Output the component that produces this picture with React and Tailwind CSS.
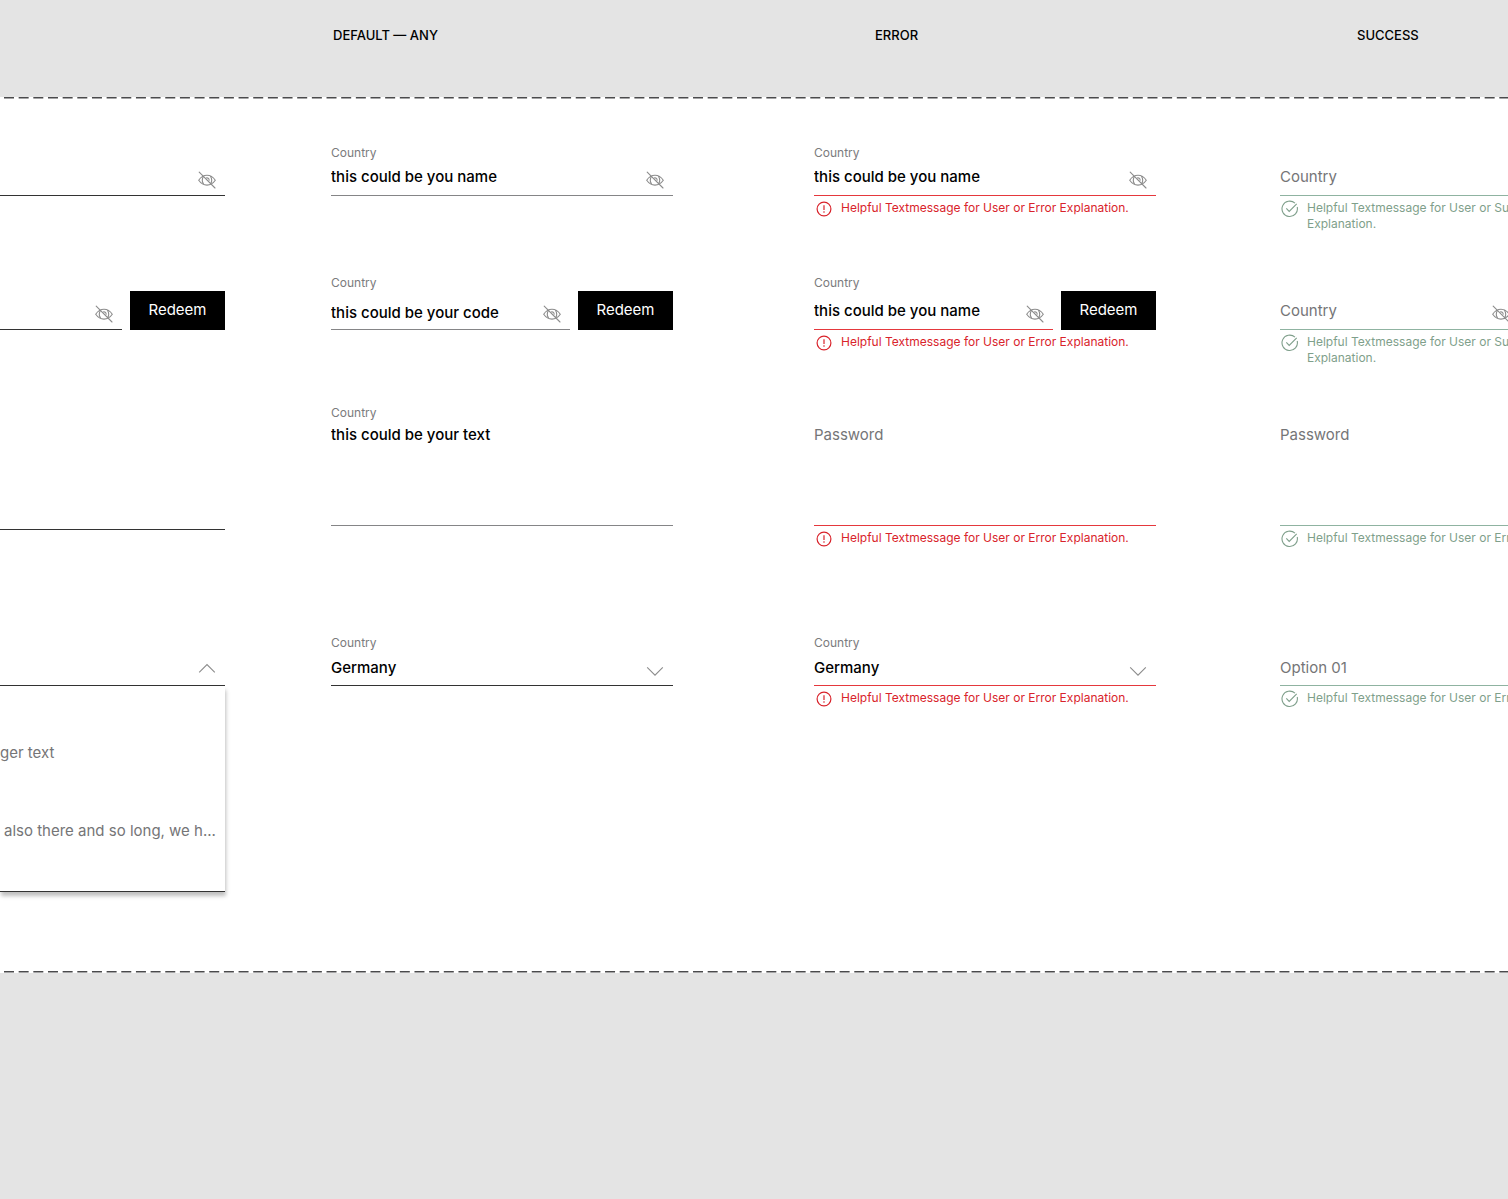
import { useId } from "react";
import { clsx } from "clsx";

const COLUMNS = "grid grid-cols-[minmax(0,225fr)_106px_minmax(0,342fr)_141px_minmax(0,342fr)_124px_minmax(0,228fr)]";
const ROWS = "grid items-start grid-rows-[130px_130px_230px_336px]";

const LINE = {
    dark: "bg-[#333333]",
    gray: "bg-[#858587]",
    error: "bg-[#e5383d]",
    success: "bg-[#8fb3a1]",
};

const ERROR_TEXT = "Helpful Textmessage for User or Error Explanation.";
const SUCCESS_TEXT = "Helpful Textmessage for User or Success Explanation.";

function EyeOff() {
    return (
        <svg className="h-[18px] w-[18px]" viewBox="0 0 18 18" fill="none" stroke="#8c8c8c" strokeWidth="1.1" strokeLinecap="round">
            <path d="M0.7 9.2C3 5.9 5.8 4.3 9 4.3s6 1.6 8.3 4.9C15 12.5 12.2 14.1 9 14.1S3 12.5 0.7 9.2Z" />
            <path d="M5.4 5.5C4 7.8 4 10.6 5.4 12.9M12.6 5.5C14 7.8 14 10.6 12.6 12.9" />
            <path d="M8.6 6.9c1.5-.2 2.6.8 2.5 2.3" />
            <path d="M1.2 1.2 17 17" />
        </svg>
    );
}

function Chevron({ up }) {
    return (
        <svg className="h-[18px] w-[18px]" viewBox="0 0 18 18" fill="none" stroke="#8c8c8c" strokeWidth="1.1">
            <path d={up ? "M1.2 13.3 9 5.5l7.8 7.8" : "M1.2 6.3 9 14.1l7.8-7.8"} />
        </svg>
    );
}

function StatusIcon({ status }) {
    if (status === "error") {
        return (
            <svg className="h-[18px] w-[18px] shrink-0" viewBox="0 0 18 18" fill="none" stroke="#d9232b" strokeWidth="1.2">
                <circle cx="9" cy="9" r="6.9" />
                <path d="M9 5.2v4.8M9 11.3v1.4" />
            </svg>
        );
    }
    return (
        <svg className="h-[18px] w-[18px] shrink-0" viewBox="0 0 18 18" fill="none" stroke="#7f9f8b" strokeWidth="1.1">
            <path d="M16.2 7A7.7 7.7 0 1 1 14 3.2" />
            <path d="M5.3 8.3 8.2 11.4 15.7 3.9" />
        </svg>
    );
}

function Message({ status, children }) {
    return (
        <div className={clsx("ml-px flex gap-2 pt-1 pr-4 text-xs leading-4", status === "error" ? "text-[#d9232b]" : "text-[#7f9f8b]")}>
            <StatusIcon status={status} />
            <p>{children}</p>
        </div>
    );
}

function Label({ id, children }) {
    return (
        <label htmlFor={id} className="block h-4 text-xs leading-4 text-[#7b7b7d]">
            {children}
        </label>
    );
}

function Underline({ color }) {
    return <div className={clsx("h-px w-full", LINE[color])} />;
}

function TextField({ label, value, placeholder, line, button, message, low }) {
    const id = useId();
    return (
        <div>
            <Label id={id}>{label}</Label>
            <div className="flex gap-2">
                <div className="relative min-w-0 flex-1">
                    <input
                        id={id}
                        aria-label={label ? undefined : placeholder || "Text"}
                        defaultValue={value}
                        placeholder={placeholder}
                        className={clsx(
                            "block w-full pr-9 text-[15px] font-medium outline-none placeholder:font-normal placeholder:text-[#757577]",
                            button ? "h-[38px]" : "h-[34px] pb-1",
                            low && "pt-1"
                        )}
                    />
                    <Underline color={line} />
                    <button type="button" aria-label="Show value" className={clsx("absolute right-[9px]", button ? "top-3.5" : "top-2.5")}>
                        <EyeOff />
                    </button>
                </div>
                {button && (
                    <button type="button" className="h-[39px] w-[95px] shrink-0 bg-black text-[15px] text-white">
                        {button}
                    </button>
                )}
            </div>
            {message && <Message status={line}>{message}</Message>}
        </div>
    );
}

function TextArea({ label, value, placeholder, line, message, tall }) {
    const id = useId();
    return (
        <div>
            <Label id={id}>{label}</Label>
            <textarea
                id={id}
                aria-label={label ? undefined : placeholder || "Text"}
                defaultValue={value}
                placeholder={placeholder}
                className={clsx(
                    "block w-full resize-none pt-1 text-[15px] leading-5 font-medium outline-none placeholder:font-normal placeholder:text-[#757577]",
                    tall ? "h-[108px]" : "h-[104px]"
                )}
            />
            <Underline color={line} />
            {message && <Message status={line}>{message}</Message>}
        </div>
    );
}

function SelectField({ label, value, line, message, muted }) {
    const id = useId();
    return (
        <div>
            <Label id={id}>{label}</Label>
            <div className="relative">
                <select
                    id={id}
                    aria-label={label ? undefined : "Option"}
                    className={clsx(
                        "block h-[34px] w-full appearance-none text-[15px] outline-none",
                        muted ? "text-[#757577]" : "font-medium"
                    )}
                >
                    <option>{value}</option>
                </select>
                <Underline color={line} />
                <span className="pointer-events-none absolute top-2.5 right-[9px]">
                    <Chevron />
                </span>
            </div>
            {message && <Message status={line}>{message}</Message>}
        </div>
    );
}

function OpenSelect() {
    return (
        <div className="relative pt-4">
            <button type="button" aria-label="Close options" aria-expanded="true" className="flex h-[34px] w-full items-center justify-end pr-[9px]">
                <Chevron up />
            </button>
            <Underline color="dark" />
            <div className="absolute inset-x-0 top-full bg-white pt-2 text-[15px] text-[#757577] shadow-[1px_4px_4px_rgba(0,0,0,0.25)]">
                <ul>
                    <li className="h-[39px]" />
                    <li className="h-[39px] leading-[39px]">ger text</li>
                    <li className="h-[39px]" />
                    <li className="h-[39px] pl-1 leading-[39px] whitespace-nowrap">also there and so long, we h...</li>
                    <li className="h-[41px]" />
                </ul>
                <Underline color="dark" />
            </div>
        </div>
    );
}

function DashedLine() {
    return (
        <svg className="block h-[2px] w-full" aria-hidden="true">
            <line x1="4" y1="0.8" x2="100%" y2="0.8" stroke="#4a4a4c" strokeWidth="1.5" strokeDasharray="10 4.66" />
        </svg>
    );
}

export default function App() {
    return (
        <div className="min-h-screen overflow-hidden bg-[#e4e4e4] font-['Inter','Liberation_Sans',sans-serif] text-black">
            <header className={clsx(COLUMNS, "h-[97px] pt-[27px] text-[13px] leading-4 font-medium")}>
                <h2 className="col-start-3 pl-0.5">DEFAULT — ANY</h2>
                <h2 className="col-start-5 pl-[61px]">ERROR</h2>
                <h2 className="col-start-7 pl-[77px]">SUCCESS</h2>
            </header>

            <main className="bg-white">
                <DashedLine />
                <div className={clsx(COLUMNS, "pt-[46px]")}>
                    <section className={clsx(ROWS, "col-start-1")}>
                        <TextField line="dark" />
                        <TextField line="dark" button="Redeem" />
                        <TextArea line="dark" tall />
                        <OpenSelect />
                    </section>

                    <section className={clsx(ROWS, "col-start-3")}>
                        <TextField label="Country" value="this could be you name" line="gray" />
                        <TextField label="Country" value="this could be your code" line="gray" button="Redeem" low />
                        <TextArea label="Country" value="this could be your text" line="gray" />
                        <SelectField label="Country" value="Germany" line="dark" />
                    </section>

                    <section className={clsx(ROWS, "col-start-5")}>
                        <TextField label="Country" value="this could be you name" line="error" message={ERROR_TEXT} />
                        <TextField label="Country" value="this could be you name" line="error" button="Redeem" message={ERROR_TEXT} />
                        <TextArea placeholder="Password" line="error" message={ERROR_TEXT} />
                        <SelectField label="Country" value="Germany" line="error" message={ERROR_TEXT} />
                    </section>

                    {/* runs past the right edge of the board */}
                    <section className={clsx(ROWS, "col-start-7 w-[342px]")}>
                        <TextField placeholder="Country" line="success" message={SUCCESS_TEXT} />
                        <TextField placeholder="Country" line="success" button="Redeem" message={SUCCESS_TEXT} />
                        <TextArea placeholder="Password" line="success" message={ERROR_TEXT} />
                        <SelectField value="Option 01" line="success" message={ERROR_TEXT} muted />
                    </section>
                </div>
                <DashedLine />
            </main>
        </div>
    );
}
